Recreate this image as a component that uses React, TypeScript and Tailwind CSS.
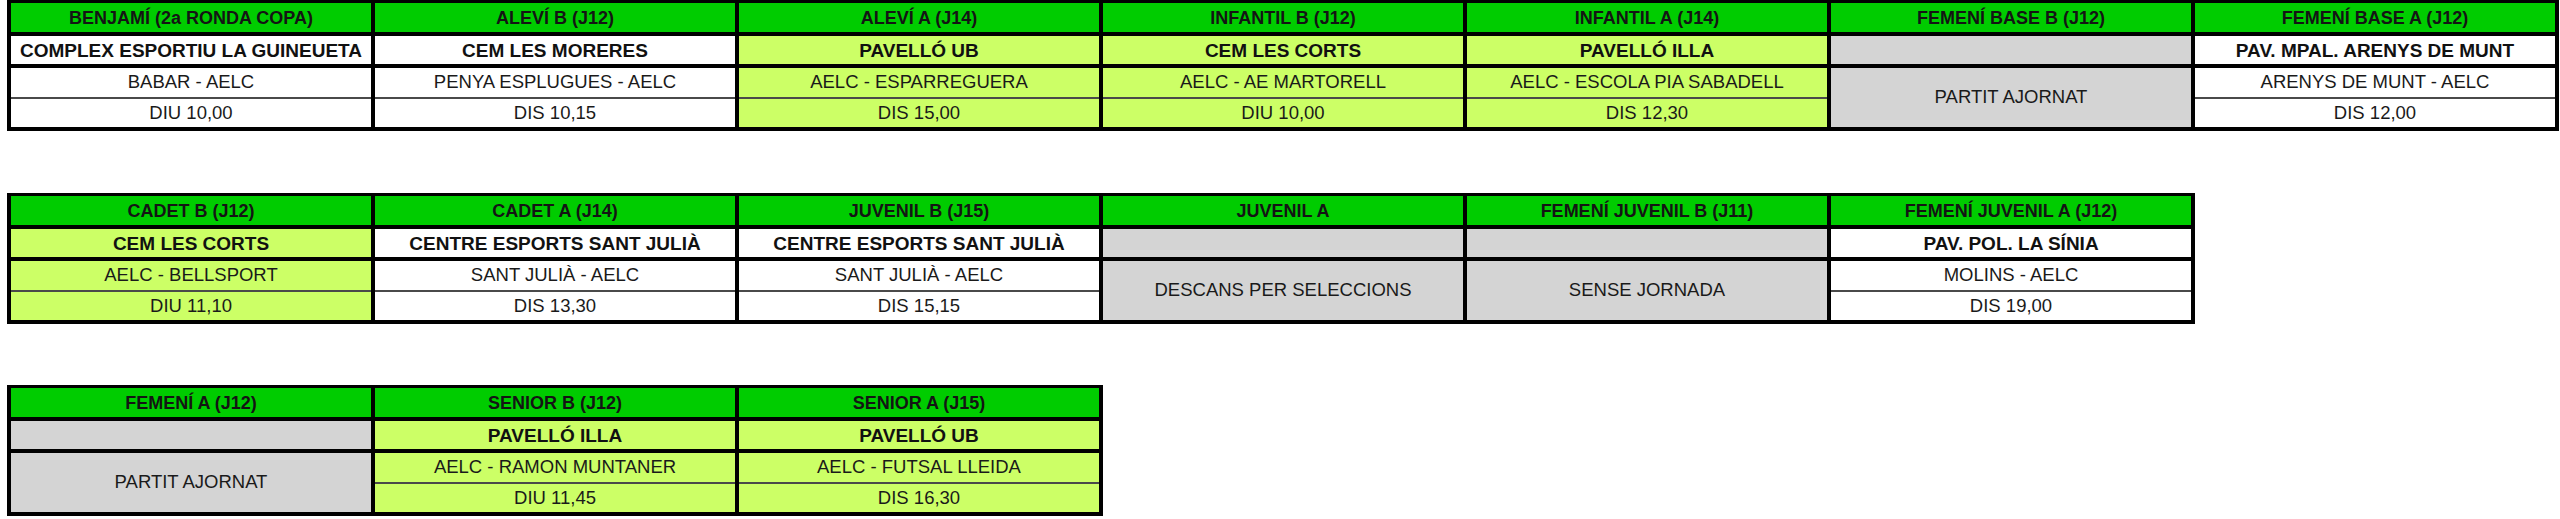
import React from "react";

type Col = {
  title: string;
  venue?: string;
  match?: string;
  time?: string;
  note?: string; // merged grey cell text
  tone?: "white" | "lime";
};

const taula1: Col[] = [
  { title: "BENJAMÍ (2a RONDA COPA)", venue: "COMPLEX ESPORTIU LA GUINEUETA", match: "BABAR - AELC", time: "DIU 10,00", tone: "white" },
  { title: "ALEVÍ B (J12)", venue: "CEM LES MORERES", match: "PENYA ESPLUGUES - AELC", time: "DIS 10,15", tone: "white" },
  { title: "ALEVÍ A (J14)", venue: "PAVELLÓ UB", match: "AELC - ESPARREGUERA", time: "DIS 15,00", tone: "lime" },
  { title: "INFANTIL B (J12)", venue: "CEM LES CORTS", match: "AELC - AE MARTORELL", time: "DIU 10,00", tone: "lime" },
  { title: "INFANTIL A (J14)", venue: "PAVELLÓ ILLA", match: "AELC - ESCOLA PIA SABADELL", time: "DIS 12,30", tone: "lime" },
  { title: "FEMENÍ BASE B (J12)", note: "PARTIT AJORNAT" },
  { title: "FEMENÍ BASE A (J12)", venue: "PAV. MPAL. ARENYS DE MUNT", match: "ARENYS DE MUNT - AELC", time: "DIS 12,00", tone: "white" },
];

const taula2: Col[] = [
  { title: "CADET B (J12)", venue: "CEM LES CORTS", match: "AELC - BELLSPORT", time: "DIU 11,10", tone: "lime" },
  { title: "CADET A (J14)", venue: "CENTRE ESPORTS SANT JULIÀ", match: "SANT JULIÀ - AELC", time: "DIS 13,30", tone: "white" },
  { title: "JUVENIL B (J15)", venue: "CENTRE ESPORTS SANT JULIÀ", match: "SANT JULIÀ - AELC", time: "DIS 15,15", tone: "white" },
  { title: "JUVENIL A", note: "DESCANS PER SELECCIONS" },
  { title: "FEMENÍ JUVENIL B (J11)", note: "SENSE JORNADA" },
  { title: "FEMENÍ JUVENIL A (J12)", venue: "PAV. POL. LA SÍNIA", match: "MOLINS - AELC", time: "DIS 19,00", tone: "white" },
];

const taula3: Col[] = [
  { title: "FEMENÍ A (J12)", note: "PARTIT AJORNAT" },
  { title: "SENIOR B (J12)", venue: "PAVELLÓ ILLA", match: "AELC - RAMON MUNTANER", time: "DIU 11,45", tone: "lime" },
  { title: "SENIOR A (J15)", venue: "PAVELLÓ UB", match: "AELC - FUTSAL LLEIDA", time: "DIS 16,30", tone: "lime" },
];

const Columna = ({ col }: { col: Col }) => {
  const bg = col.tone === "lime" ? "bg-[#ccff66]" : "bg-white";
  return (
    <div className="flex w-[360px] flex-col gap-[4px]">
      <div className="flex h-[29px] items-center justify-center bg-[#00cc00] text-[18px] font-bold text-[#141414]">
        {col.title}
      </div>
      {col.note ? (
        <>
          <div className="h-[28px] bg-[#d4d4d4]" />
          <div className="flex h-[59px] items-center justify-center bg-[#d4d4d4] text-[18.5px] text-[#1a1a1a]">
            {col.note}
          </div>
        </>
      ) : (
        <>
          <div className={`flex h-[28px] items-center justify-center ${bg} text-[19px] font-bold text-[#111]`}>
            {col.venue}
          </div>
          <div className="flex flex-col">
            <div className={`flex h-[29px] items-center justify-center ${bg} text-[18.5px] text-[#1a1a1a]`}>
              {col.match}
            </div>
            <div className="h-[2px] bg-[#4a4a4a]" />
            <div className={`flex h-[28px] items-center justify-center ${bg} text-[18.5px] text-[#1a1a1a]`}>
              {col.time}
            </div>
          </div>
        </>
      )}
    </div>
  );
};

const Taula = ({ cols }: { cols: Col[] }) => (
  <div className="flex w-fit gap-[4px] bg-black px-[4px] pb-[4px] pt-[3px]">
    {cols.map((c, i) => (
      <Columna key={i} col={c} />
    ))}
  </div>
);

export default function App() {
  return (
    <div
      className="h-[519px] w-[2560px] bg-white pl-[7px] leading-none"
      style={{ fontFamily: '"Liberation Sans", Arial, sans-serif' }}
    >
      <Taula cols={taula1} />
      <div className="mt-[62px]">
        <Taula cols={taula2} />
      </div>
      <div className="mt-[61px]">
        <Taula cols={taula3} />
      </div>
    </div>
  );
}
